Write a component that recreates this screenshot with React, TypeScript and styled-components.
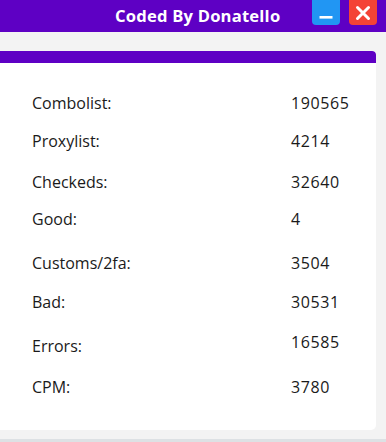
import styled, { createGlobalStyle } from "styled-components";

const GlobalStyle = createGlobalStyle`
  html, body {
    margin: 0;
    padding: 0;
    background: #f3f3f3;
  }
`

const stats = [
    { label: "Combolist:", value: "190565", h: 38 },
    { label: "Proxylist:", value: "4214", h: 41 },
    { label: "Checkeds:", value: "32640", h: 37 },
    { label: "Good:", value: "4", h: 44 },
    { label: "Customs/2fa:", value: "3504", h: 39 },
    { label: "Bad:", value: "30531", h: 44 },
    { label: "Errors:", value: "16585", h: 41, shift: -4 },
    { label: "CPM:", value: "3780", h: 40 },
]

function App() {
    return (
        <Window>
            <GlobalStyle />
            <TitleBar>
                <Title>Coded By Donatello</Title>
                <Buttons>
                    <WinButton color="#2196f3">
                        <svg width="16" height="16" viewBox="0 0 16 16">
                            <rect x="1.5" y="11" width="13" height="2.6" fill="#fff" />
                        </svg>
                    </WinButton>
                    <WinButton color="#f44336">
                        <svg width="18" height="18" viewBox="0 0 18 18">
                            <path d="M3.5 3.5 L14.5 14.5 M14.5 3.5 L3.5 14.5" stroke="#fff" strokeWidth="3" strokeLinecap="round" />
                        </svg>
                    </WinButton>
                </Buttons>
            </TitleBar>
            <Body>
                <Card>
                    <CardHead />
                    <StatList>
                        {stats.map((s) => (
                            <StatRow key={s.label} $h={s.h}>
                                <Label>{s.label}</Label>
                                <Value $shift={s.shift || 0}>{s.value}</Value>
                            </StatRow>
                        ))}
                    </StatList>
                </Card>
            </Body>
            <BottomBar />
        </Window>
    )
}

const Window = styled.div`
    width: 386px;
    height: 442px;
    display: flex;
    flex-direction: column;
    background: #f3f3f3;
    overflow: hidden;
    font-family: "Open Sans", "Noto Sans", sans-serif;
`

const TitleBar = styled.div`
    height: 32px;
    background: #5e00c4;
    display: flex;
    align-items: flex-start;
    justify-content: flex-end;
    position: relative;
`

const Title = styled.div`
    position: absolute;
    left: 115px;
    top: 4px;
    color: #fff;
    font-weight: 700;
    font-size: 16.6px;
    letter-spacing: 0.2px;
`

const Buttons = styled.div`
    display: flex;
    gap: 9px;
    margin-right: 9px;
`

const WinButton = styled.div<{ color: string }>`
    width: 28px;
    height: 25px;
    background: ${(p) => p.color};
    border-radius: 0 0 4px 4px;
    display: flex;
    align-items: center;
    justify-content: center;
`

const Body = styled.div`
    flex: 1;
    padding: 19px 10px 9px 0;
    display: flex;
`

const Card = styled.div`
    flex: 1;
    background: #fff;
    border-radius: 0 4px 5px 0;
    overflow: hidden;
    display: flex;
    flex-direction: column;
`

const CardHead = styled.div`
    height: 12px;
    background: #5e00c4;
    border-top-right-radius: 3px;
`

const StatList = styled.div`
    padding: 29px 0 0 32px;
    display: flex;
    flex-direction: column;
`

const StatRow = styled.div<{ $h: number }>`
    height: ${(p) => p.$h}px;
    display: flex;
    align-items: flex-start;
    color: #1a1a1a;
    font-size: 16px;
    line-height: 22px;
`

const Label = styled.span`
    width: 259px;
`

const Value = styled.span<{ $shift: number }>`
    position: relative;
    top: ${(p) => p.$shift}px;
    letter-spacing: 0.6px;
`

const BottomBar = styled.div`
    height: 3px;
    background: #dde1e4;
`

export default App
